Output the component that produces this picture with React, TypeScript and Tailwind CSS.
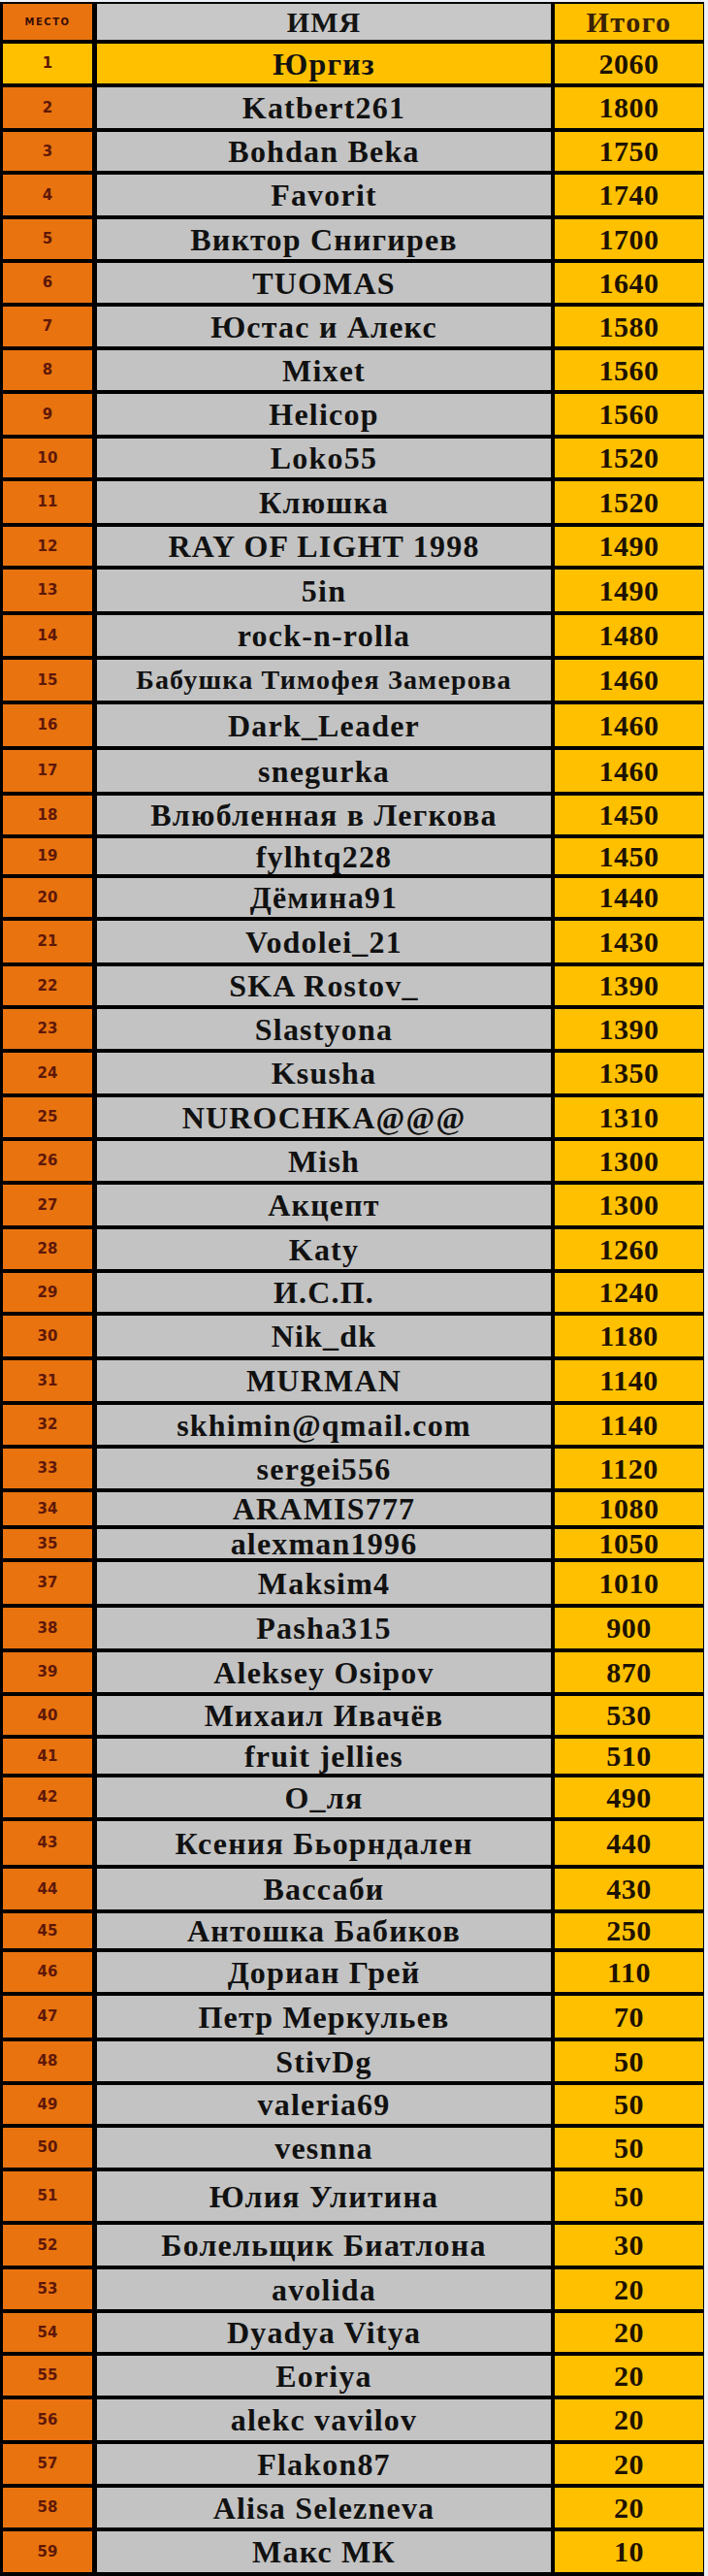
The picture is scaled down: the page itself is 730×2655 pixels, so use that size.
import React from "react";

type Row = { r: string; n: string; t: string; h: string; s?: string };

const rows: Row[] = [
  { r: "1", n: "Юргиз", t: "2060", h: "h-[45px]" },
  { r: "2", n: "Katbert261", t: "1800", h: "h-[46px]" },
  { r: "3", n: "Bohdan Beka", t: "1750", h: "h-[44px]" },
  { r: "4", n: "Favorit", t: "1740", h: "h-[46px]" },
  { r: "5", n: "Виктор Снигирев", t: "1700", h: "h-[45px]" },
  { r: "6", n: "TUOMAS", t: "1640", h: "h-[45px]" },
  { r: "7", n: "Юстас и Алекс", t: "1580", h: "h-[45px]" },
  { r: "8", n: "Mixet", t: "1560", h: "h-[45px]" },
  { r: "9", n: "Helicop", t: "1560", h: "h-[46px]" },
  { r: "10", n: "Loko55", t: "1520", h: "h-[44px]" },
  { r: "11", n: "Клюшка", t: "1520", h: "h-[47px]" },
  { r: "12", n: "RAY OF LIGHT 1998", t: "1490", h: "h-[44px]" },
  { r: "13", n: "5in", t: "1490", h: "h-[47px]" },
  { r: "14", n: "rock-n-rolla", t: "1480", h: "h-[46px]" },
  { r: "15", n: "Бабушка Тимофея Замерова", t: "1460", h: "h-[46px]", s: "text-[28px]" },
  { r: "16", n: "Dark_Leader", t: "1460", h: "h-[47px]" },
  { r: "17", n: "snegurka", t: "1460", h: "h-[47px]" },
  { r: "18", n: "Влюбленная в Легкова", t: "1450", h: "h-[44px]" },
  { r: "19", n: "fylhtq228", t: "1450", h: "h-[41px]" },
  { r: "20", n: "Дёмина91", t: "1440", h: "h-[44px]" },
  { r: "21", n: "Vodolei_21", t: "1430", h: "h-[47px]" },
  { r: "22", n: "SKA Rostov_", t: "1390", h: "h-[44px]" },
  { r: "23", n: "Slastyona", t: "1390", h: "h-[45px]" },
  { r: "24", n: "Ksusha", t: "1350", h: "h-[46px]" },
  { r: "25", n: "NUROCHKA@@@", t: "1310", h: "h-[45px]" },
  { r: "26", n: "Mish", t: "1300", h: "h-[45px]" },
  { r: "27", n: "Акцепт", t: "1300", h: "h-[46px]" },
  { r: "28", n: "Katy", t: "1260", h: "h-[45px]" },
  { r: "29", n: "И.С.П.", t: "1240", h: "h-[44px]" },
  { r: "30", n: "Nik_dk", t: "1180", h: "h-[46px]" },
  { r: "31", n: "MURMAN", t: "1140", h: "h-[46px]" },
  { r: "32", n: "skhimin@qmail.com", t: "1140", h: "h-[45px]" },
  { r: "33", n: "sergei556", t: "1120", h: "h-[45px]" },
  { r: "34", n: "ARAMIS777", t: "1080", h: "h-[38px]" },
  { r: "35", n: "alexman1996", t: "1050", h: "h-[34px]" },
  { r: "37", n: "Maksim4", t: "1010", h: "h-[47px]" },
  { r: "38", n: "Pasha315", t: "900", h: "h-[46px]" },
  { r: "39", n: "Aleksey Osipov", t: "870", h: "h-[45px]" },
  { r: "40", n: "Михаил Ивачёв", t: "530", h: "h-[44px]" },
  { r: "41", n: "fruit jellies", t: "510", h: "h-[40px]" },
  { r: "42", n: "О_ля", t: "490", h: "h-[45px]" },
  { r: "43", n: "Ксения Бьорндален", t: "440", h: "h-[49px]" },
  { r: "44", n: "Вассаби", t: "430", h: "h-[46px]" },
  { r: "45", n: "Антошка Бабиков", t: "250", h: "h-[40px]" },
  { r: "46", n: "Дориан Грей", t: "110", h: "h-[45px]" },
  { r: "47", n: "Петр Меркульев", t: "70", h: "h-[47px]" },
  { r: "48", n: "StivDg", t: "50", h: "h-[45px]" },
  { r: "49", n: "valeria69", t: "50", h: "h-[44px]" },
  { r: "50", n: "vesnna", t: "50", h: "h-[45px]" },
  { r: "51", n: "Юлия Улитина", t: "50", h: "h-[55px]" },
  { r: "52", n: "Болельщик Биатлона", t: "30", h: "h-[46px]" },
  { r: "53", n: "avolida", t: "20", h: "h-[45px]" },
  { r: "54", n: "Dyadya Vitya", t: "20", h: "h-[44px]" },
  { r: "55", n: "Eoriya", t: "20", h: "h-[45px]" },
  { r: "56", n: "alekc vavilov", t: "20", h: "h-[46px]" },
  { r: "57", n: "Flakon87", t: "20", h: "h-[45px]" },
  { r: "58", n: "Alisa Selezneva", t: "20", h: "h-[45px]" },
  { r: "59", n: "Макс МК", t: "10", h: "h-[46px]" },
];

const serif = "font-['Liberation_Serif','Times_New_Roman',serif]";
const sans = "font-['DejaVu_Sans','Verdana',sans-serif]";

function DataRow({ row, first }: { row: Row; first: boolean }) {
  return (
    <div className={`flex ${row.h} border-b-4 border-black pl-[3px]`}>
      <div
        className={`flex w-[92px] items-center justify-center ${sans} text-[15px] font-bold text-[#5e1808] ${
          first ? "bg-[#ffc000]" : "bg-[#e9730f]"
        }`}
      >
        {row.r}
      </div>
      <div
        className={`ml-[5px] flex w-[468px] items-center justify-center whitespace-nowrap ${serif} ${
          row.s ?? "text-[32px]"
        } font-bold leading-none tracking-[1.2px] text-[#111111] ${first ? "bg-[#ffc000]" : "bg-[#c3c3c3]"}`}
      >
        {row.n}
      </div>
      <div
        className={`ml-[4px] flex w-[154px] items-center justify-center border-r border-black bg-[#ffc000] ${serif} text-[30px] font-bold leading-none tracking-[0.5px] text-[#1e1200]`}
      >
        {row.t}
      </div>
    </div>
  );
}

export default function App() {
  return (
    <div className="w-[730px] bg-[#eef2f8]">
      <div className="h-[2px]" />
      <div className="w-[726px] bg-black">
        <div className="flex h-[43px] border-t-2 border-b-4 border-black pl-[3px]">
          <div
            className={`flex w-[92px] items-center justify-center bg-[#e9730f] ${sans} text-[10px] font-bold uppercase tracking-[1.5px] text-[#3a0f05]`}
          >
            место
          </div>
          <div
            className={`ml-[5px] flex w-[468px] items-center justify-center bg-[#c8c8c8] ${serif} text-[30px] font-bold leading-none tracking-[1px] text-[#141414]`}
          >
            ИМЯ
          </div>
          <div
            className={`ml-[4px] flex w-[154px] items-center justify-center border-r border-black bg-[#ffc000] ${serif} text-[30px] font-bold leading-none tracking-[1.5px] text-[#3a2205]`}
          >
            Итого
          </div>
        </div>
        {rows.map((row, i) => (
          <DataRow key={row.r} row={row} first={i === 0} />
        ))}
      </div>
    </div>
  );
}
